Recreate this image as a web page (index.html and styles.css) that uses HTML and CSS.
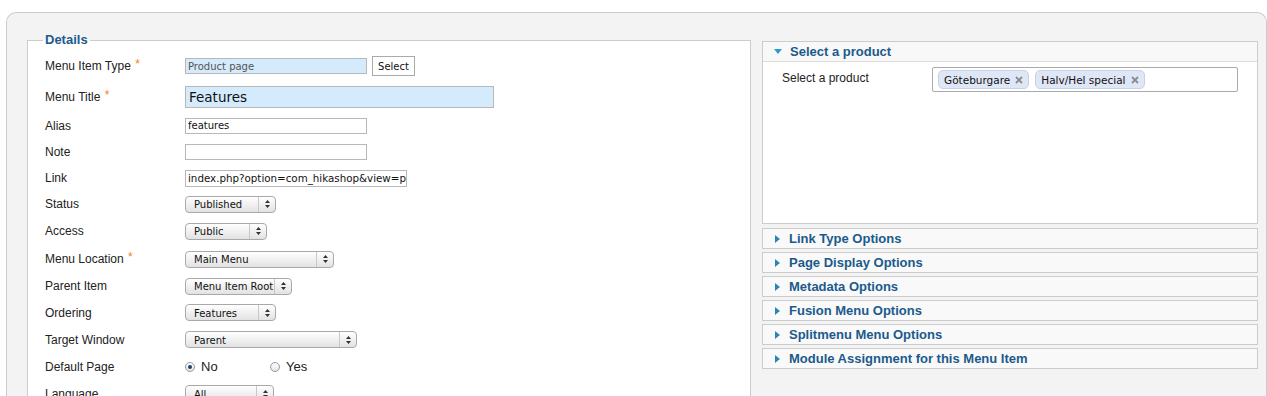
FILE: index.html
```html
<!DOCTYPE html>
<html lang="en">
<head>
  <meta charset="UTF-8" />
  <title>Menu Item: Edit</title>
  <link rel="stylesheet" href="styles.css">
</head>
<body>
  <div class="panel">
    <fieldset class="details">
      <legend>Details</legend>

      <div class="row h32">
        <label>Menu Item Type <span class="req">*</span></label>
        <input class="txt type" value="Product page" readonly>
        <button class="btn">Select</button>
      </div>
      <div class="row h30">
        <label>Menu Title <span class="req">*</span></label>
        <input class="txt title" value="Features">
      </div>
      <div class="row">
        <label>Alias</label>
        <input class="txt alias" value="features">
      </div>
      <div class="row h26">
        <label>Note</label>
        <input class="txt alias" value="">
      </div>
      <div class="row h26">
        <label>Link</label>
        <div class="txt link">index.php?option=com_hikashop&amp;view=product&amp;layout=show</div>
      </div>
      <div class="row h26">
        <label>Status</label>
        <div class="sel" style="width:91px"><span>Published</span><i><svg width="5" height="8" viewBox="0 0 5 8"><path d="M2.5 0L5 3H0z M2.5 8L5 5H0z" fill="#333"/></svg></i></div>
      </div>
      <div class="row h28">
        <label>Access</label>
        <div class="sel" style="width:82px"><span>Public</span><i><svg width="5" height="8" viewBox="0 0 5 8"><path d="M2.5 0L5 3H0z M2.5 8L5 5H0z" fill="#333"/></svg></i></div>
      </div>
      <div class="row h28">
        <label>Menu Location <span class="req">*</span></label>
        <div class="sel" style="width:149px"><span>Main Menu</span><i><svg width="5" height="8" viewBox="0 0 5 8"><path d="M2.5 0L5 3H0z M2.5 8L5 5H0z" fill="#333"/></svg></i></div>
      </div>
      <div class="row h26">
        <label>Parent Item</label>
        <div class="sel" style="width:107px"><span>Menu Item Root</span><i><svg width="5" height="8" viewBox="0 0 5 8"><path d="M2.5 0L5 3H0z M2.5 8L5 5H0z" fill="#333"/></svg></i></div>
      </div>
      <div class="row">
        <label>Ordering</label>
        <div class="sel" style="width:91px"><span>Features</span><i><svg width="5" height="8" viewBox="0 0 5 8"><path d="M2.5 0L5 3H0z M2.5 8L5 5H0z" fill="#333"/></svg></i></div>
      </div>
      <div class="row">
        <label>Target Window</label>
        <div class="sel" style="width:172px"><span>Parent</span><i><svg width="5" height="8" viewBox="0 0 5 8"><path d="M2.5 0L5 3H0z M2.5 8L5 5H0z" fill="#333"/></svg></i></div>
      </div>
      <div class="row">
        <label>Default Page</label>
        <span class="radio on"></span><span class="opt">No</span>
        <span class="radio"></span><span class="opt">Yes</span>
      </div>
      <div class="row">
        <label>Language</label>
        <div class="sel" style="width:89px"><span>All</span><i><svg width="5" height="8" viewBox="0 0 5 8"><path d="M2.5 0L5 3H0z M2.5 8L5 5H0z" fill="#333"/></svg></i></div>
      </div>
    </fieldset>

    <div class="side">
      <div class="pane open">
        <h3 class="pane-head"><span class="tri down"></span>Select a product</h3>
        <div class="pane-body">
          <label>Select a product</label>
          <div class="tags">
            <span class="tag">Göteburgare <svg width="8" height="8" viewBox="0 0 8 8"><path d="M1 1L7 7M7 1L1 7" stroke="#8a8a8a" stroke-width="1.8"/></svg></span>
            <span class="tag">Halv/Hel special <svg width="8" height="8" viewBox="0 0 8 8"><path d="M1 1L7 7M7 1L1 7" stroke="#8a8a8a" stroke-width="1.8"/></svg></span>
          </div>
        </div>
      </div>
      <h3 class="pane-head closed"><span class="tri"></span>Link Type Options</h3>
      <h3 class="pane-head closed"><span class="tri"></span>Page Display Options</h3>
      <h3 class="pane-head closed"><span class="tri"></span>Metadata Options</h3>
      <h3 class="pane-head closed"><span class="tri"></span>Fusion Menu Options</h3>
      <h3 class="pane-head closed"><span class="tri"></span>Splitmenu Menu Options</h3>
      <h3 class="pane-head closed"><span class="tri"></span>Module Assignment for this Menu Item</h3>
    </div>
  </div>
</body>
</html>
```

FILE: styles.css
```css
body { margin: 0; background: #fff; font-family: "Liberation Sans", Arial, sans-serif; font-size: 12px; color: #222; height: 396px; overflow: hidden; }

.panel { margin: 12px 0 0 6px; border: 1px solid #ccc; border-bottom: 0; border-radius: 10px 10px 0 0; background: #f3f3f3; padding: 19px 7px 40px 20px; display: grid; grid-template-columns: 724px 496px; column-gap: 11px; align-items: start; }

.details { margin: 0; border: 1px solid #ccc; background: #fff; padding: 2px 0 40px 17px; min-width: 0; }
.details legend { color: #1d5b8e; font-weight: bold; font-size: 13px; padding: 0 2px; margin-left: -2px; line-height: 16px; }

.row { display: flex; align-items: center; height: 27px; }
.row.h32 { height: 32px; }
.row.h30 { height: 30px; }
.row.h28 { height: 28px; }
.row.h26 { height: 26px; }
.row label { width: 140px; flex: none; }
.req { color: #f0821e; font-size: 12px; vertical-align: top; position: relative; top: -2px; margin-left: 1px; }

.txt { box-sizing: border-box; border: 1px solid #b8b8b8; font-family: "DejaVu Sans", Verdana, sans-serif; font-size: 10px; line-height: 14px; padding: 0 2px; height: 16px; color: #111; background: #fff; margin: 0; }
.txt.type { width: 182px; background: #d4eafd; color: #555; }
.txt.title { width: 309px; height: 22px; background: #d4eafd; font-size: 13.5px; line-height: 20px; padding: 0 3px; }
.txt.alias { width: 182px; }
.txt.link { width: 222px; height: 17px; line-height: 15px; font-size: 10.3px; white-space: nowrap; overflow: hidden; }
.btn { margin-left: 5px; height: 20px; width: 43px; padding: 0; border: 1px solid #aaa; background: #fff; font-family: "DejaVu Sans", Verdana, sans-serif; font-size: 10px; color: #111; }

.sel { box-sizing: border-box; height: 17px; border: 1px solid #a9a9a9; border-radius: 4px; background: linear-gradient(#fff, #f2f2f2 45%, #e2e2e2); display: flex; align-items: center; font-family: "DejaVu Sans", Verdana, sans-serif; font-size: 10px; color: #111; }
.sel span { flex: 1; padding-left: 8px; white-space: nowrap; overflow: hidden; padding-top: 1px; }
.sel i { width: 17px; height: 15px; border-left: 1px solid #c8c8c8; display: flex; align-items: center; justify-content: center; box-sizing: border-box; }

.radio { width: 10px; height: 10px; border: 1px solid #999; border-radius: 50%; background: linear-gradient(#fff, #e4e4e4); box-sizing: border-box; position: relative; }
.radio.on::after { content: ""; position: absolute; left: 2px; top: 2px; width: 4px; height: 4px; border-radius: 50%; background: #1e3f72; }
.opt { font-size: 13px; margin-left: 6px; width: 69px; }

.side { margin-top: 9px; }
.pane-head { margin: 0 0 3px; box-sizing: border-box; height: 21px; border: 1px solid #ccc; background: #f9f9f9; color: #1b5a8c; font-size: 13px; font-weight: bold; display: flex; align-items: center; padding-left: 11px; }
.pane.open { border: 1px solid #ccc; background: #fff; margin-bottom: 4px; }
.pane.open .pane-head { border: 0; border-bottom: 1px solid #ddd; margin: 0; height: 20px; background: #f8f8f8; }
.tri { width: 0; height: 0; border-style: solid; border-color: transparent transparent transparent #2e86b8; border-width: 4px 0 4px 5px; margin-right: 9px; margin-left: 1px; }
.tri.down { border-color: #2e9bcc transparent transparent transparent; border-width: 5px 4px 0 4px; margin-right: 8px; margin-left: 0; }

.pane-body { height: 161px; display: flex; align-items: flex-start; padding: 5px 0 0 19px; box-sizing: border-box; }
.pane-body label { width: 150px; flex: none; padding-top: 4px; }
.tags { width: 306px; height: 25px; box-sizing: border-box; border: 1px solid #aaa; border-radius: 2px; background: #fff; display: flex; align-items: center; gap: 6px; padding-left: 5px; }
.tag { height: 19px; box-sizing: border-box; border: 1px solid #c6d2e8; border-radius: 5px; background: #dfe7f6; padding: 0 5px; display: flex; align-items: center; gap: 5px; font-family: "DejaVu Sans", Verdana, sans-serif; font-size: 10.5px; color: #111; }
```
